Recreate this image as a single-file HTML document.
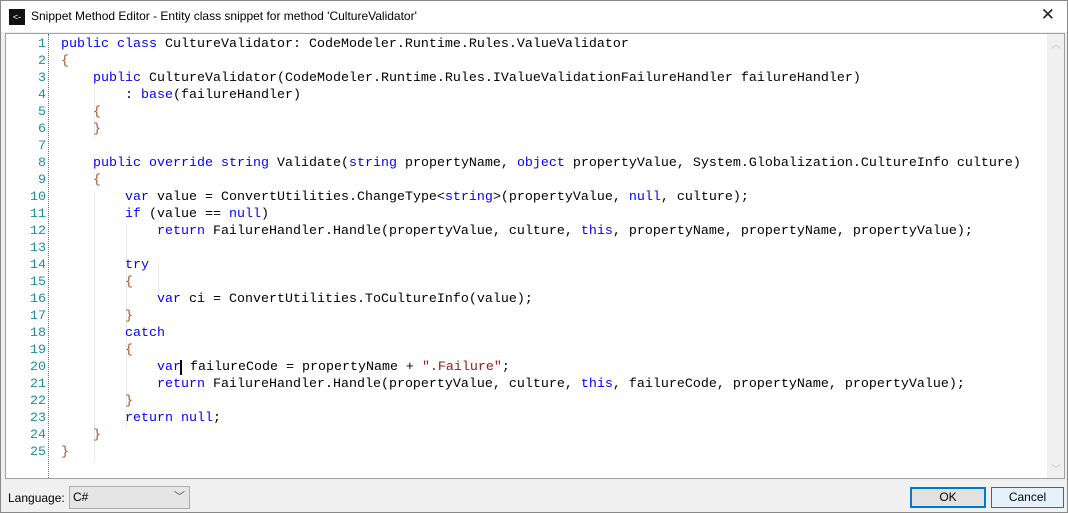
<!DOCTYPE html>
<html><head><style>
body{margin:0;width:1068px;height:513px;background:#f0f0f0;font-family:"Liberation Sans",sans-serif;position:relative;overflow:hidden}
.win{position:absolute;left:0;top:0;width:1066px;height:511px;border:1px solid #888;background:#f0f0f0}
.title{position:absolute;left:0;top:0;width:1066px;height:31px;background:#fff;font-size:12px;color:#000}
.title .t{position:absolute;left:30px;top:8px}
.icon{position:absolute;left:8px;top:8px;width:16px;height:16px;background:#111;color:#fff;font-size:9px;line-height:16px;text-align:center}
.x{position:absolute;right:12px;top:4px;font-size:17px;font-weight:100;color:#222}
.ed{position:absolute;left:4px;top:32px;width:1058px;height:444px;border:1px solid #a0a0a0;background:#fff}
.sb{position:absolute;right:0;top:0;width:17px;height:444px;background:#f0f0f0}
.code{position:absolute;left:0;top:2px;font-family:"Liberation Mono",monospace;font-size:13.33px;line-height:17px;white-space:pre;color:#000}
.ln{position:absolute;left:0;top:2px;width:40px;text-align:right;font-family:"Liberation Mono",monospace;font-size:13.33px;line-height:17px;color:#1a8f9a;white-space:pre}
.dot{position:absolute;left:42px;top:0;height:444px;border-left:1px dotted #1a8f9a}
.k{color:#0000ff}.b{color:#a0522d}.s{color:#a31515}
.g{position:absolute;border-left:1px solid #ececec}
.lab{position:absolute;left:7px;top:490px;font-size:12px}
.combo{position:absolute;left:68px;top:485px;width:119px;height:21px;border:1px solid #adadad;background:#e5e5e5;font-size:12px}
.btn{position:absolute;top:486px;height:19px;font-size:12px;text-align:center;line-height:19px;background:#e1e1e1;border:1px solid #adadad}
</style></head><body><div class="win">
<div class="title"><div class="icon">&lt;-</div><span class="t">Snippet Method Editor - Entity class snippet for method 'CultureValidator'</span><span class="x">✕</span></div>
<div class="ed">
<div class="ln">1
2
3
4
5
6
7
8
9
10
11
12
13
14
15
16
17
18
19
20
21
22
23
24
25</div>
<div class="dot"></div>
<div class="g" style="left:88px;top:54px;height:51px"></div>
<div class="g" style="left:88px;top:156px;height:272px"></div>
<div class="g" style="left:120px;top:190px;height:204px"></div>
<div class="g" style="left:152px;top:224px;height:34px"></div>
<div class="code" style="left:55px"><span class="k">public class</span> CultureValidator: CodeModeler.Runtime.Rules.ValueValidator
<span class="b">{</span>
    <span class="k">public</span> CultureValidator(CodeModeler.Runtime.Rules.IValueValidationFailureHandler failureHandler)
        : <span class="k">base</span>(failureHandler)
    <span class="b">{</span>
    <span class="b">}</span>

    <span class="k">public override string</span> Validate(<span class="k">string</span> propertyName, <span class="k">object</span> propertyValue, System.Globalization.CultureInfo culture)
    <span class="b">{</span>
        <span class="k">var</span> value = ConvertUtilities.ChangeType&lt;<span class="k">string</span>&gt;(propertyValue, <span class="k">null</span>, culture);
        <span class="k">if</span> (value == <span class="k">null</span>)
            <span class="k">return</span> FailureHandler.Handle(propertyValue, culture, <span class="k">this</span>, propertyName, propertyName, propertyValue);

        <span class="k">try</span>
        <span class="b">{</span>
            <span class="k">var</span> ci = ConvertUtilities.ToCultureInfo(value);
        <span class="b">}</span>
        <span class="k">catch</span>
        <span class="b">{</span>
            <span class="k">var</span><span style="border-left:2px solid #000;margin-left:-1px"> </span>failureCode = propertyName + <span class="s">".Failure"</span>;
            <span class="k">return</span> FailureHandler.Handle(propertyValue, culture, <span class="k">this</span>, failureCode, propertyName, propertyValue);
        <span class="b">}</span>
        <span class="k">return null</span>;
    <span class="b">}</span>
<span class="b">}</span></div>
<div class="sb"><span style="position:absolute;left:4px;top:2px;color:#c0c0c0;font-size:10px">︿</span><span style="position:absolute;left:4px;bottom:2px;color:#c0c0c0;font-size:10px">﹀</span></div>
</div>
<div class="lab">Language:</div>
<div class="combo"><span style="position:absolute;left:3px;top:3px">C#</span><span style="position:absolute;right:4px;top:1px;color:#555;font-size:11px">﹀</span></div>
<div class="btn" style="left:909px;width:72px;border:2px solid #0078d7;height:17px;line-height:17px">OK</div>
<div class="btn" style="left:990px;width:71px;background:#e5f1fb;border-color:#0078d7">Cancel</div>
</div></body></html>
